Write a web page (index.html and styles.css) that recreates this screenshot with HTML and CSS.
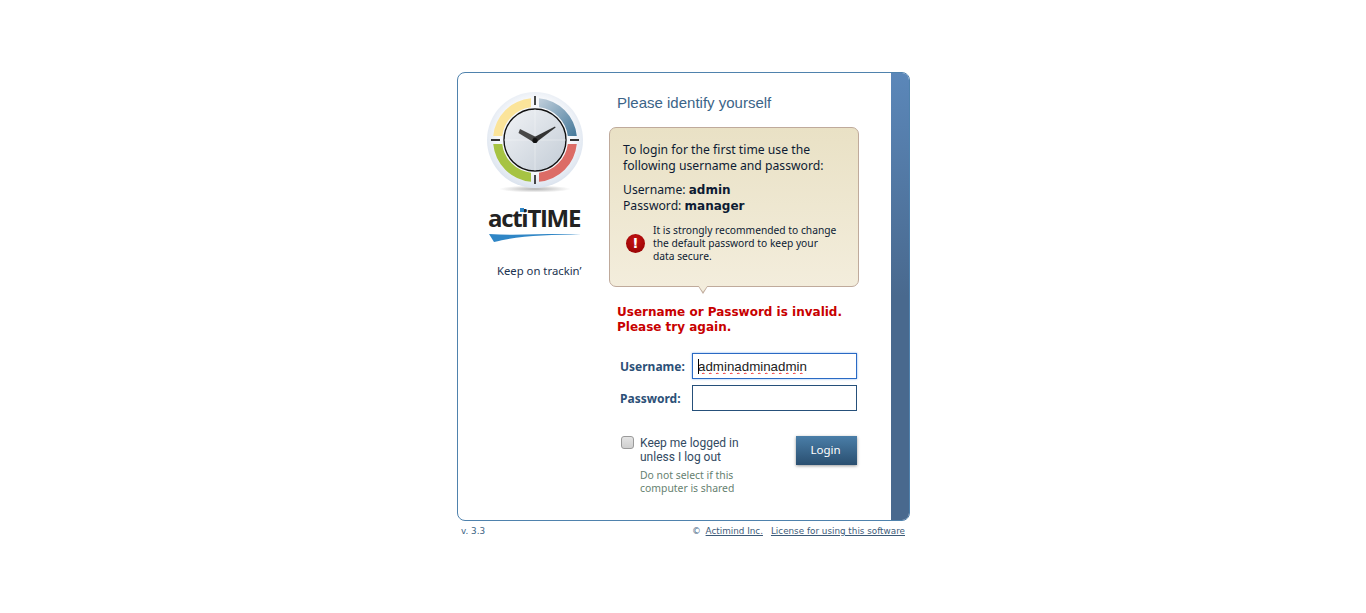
FILE: index.html
```html
<!DOCTYPE html>
<html lang="en">
<head>
    <meta charset="UTF-8">
    <title>actiTIME - Login</title>
    <link rel="stylesheet" href="styles.css">
</head>
<body>
    <div class="wrapper">
        <div class="card">
            <div class="brand">
                <svg class="clock" width="100" height="106" viewBox="0 0 100 106">
                    <defs>
                        <radialGradient id="discFill" cx="50%" cy="45%" r="55%">
                            <stop offset="0.7" stop-color="#f6f8fb"/>
                            <stop offset="1" stop-color="#dbe3ee"/>
                        </radialGradient>
                        <linearGradient id="dialFill" x1="0" y1="0" x2="1" y2="1">
                            <stop offset="0" stop-color="#f1f3f6"/>
                            <stop offset="1" stop-color="#c3ccd6"/>
                        </linearGradient>
                        <linearGradient id="blueFill" x1="0" y1="0" x2="1" y2="1">
                            <stop offset="0" stop-color="#c2d0dc"/>
                            <stop offset="1" stop-color="#44789a"/>
                        </linearGradient>
                        <radialGradient id="floorFill">
                            <stop offset="0" stop-color="#b4b4b4"/>
                            <stop offset="1" stop-color="#ffffff"/>
                        </radialGradient>
                    </defs>
                    <ellipse cx="50" cy="99" rx="36" ry="3.5" fill="url(#floorFill)"/>
                    <circle cx="50" cy="50" r="48" fill="url(#discFill)"/>
                    <path d="M46 8.2A42 42 0 0 0 8.2 46L17.2 46A33 33 0 0 1 46 17.2Z" fill="#fbe49a"/>
                    <path d="M54 8.2A42 42 0 0 1 91.8 46L82.8 46A33 33 0 0 0 54 17.2Z" fill="url(#blueFill)"/>
                    <path d="M8.2 54A42 42 0 0 0 46 91.8L46 82.8A33 33 0 0 1 17.2 54Z" fill="#a6c343"/>
                    <path d="M54 91.8A42 42 0 0 0 91.8 54L82.8 54A33 33 0 0 1 54 82.8Z" fill="#dc6c66"/>
                    <path d="M50 6V15M50 85V94M6 50H15M85 50H94" stroke="#333" stroke-width="1.8"/>
                    <circle cx="50" cy="50" r="31" fill="url(#dialFill)" stroke="#111" stroke-width="1.4"/>
                    <path d="M50 19V81M19 50H81" stroke="#fff" stroke-width="0.6" opacity="0.6"/>
                    <path d="M33.5 43L35 39L51 47L49 52.5Z" fill="#484848"/>
                    <path d="M47.5 48L70 36.5L70.6 37.5L51 52.5Z" fill="#333"/>
                    <circle cx="50" cy="50.5" r="2.6" fill="#111"/>
                </svg>
                <div class="logo-name">actiTIME</div>
                <svg class="swoosh" width="94" height="10" viewBox="0 0 94 10">
                    <path d="M1 1C30 3 62 0 93 1.5C60 1.5 28 3 6 9Z" fill="#2f86c6"/>
                </svg>
                <div class="slogan">Keep on trackin’</div>
            </div>

            <div class="main">
                <h1>Please identify yourself</h1>

                <div class="hint">
                    <p class="hint-intro">To login for the first time use the<br>following username and password:</p>
                    <p class="hint-creds">Username: <b>admin</b><br>Password: <b>manager</b></p>
                    <div class="hint-warning">
                        <span class="warning-icon">!</span>
                        <p>It is strongly recommended to change<br>the default password to keep your<br>data secure.</p>
                    </div>
                </div>

                <div class="error">Username or Password is invalid.<br>Please try again.</div>

                <form class="login-form">
                    <div class="form-row">
                        <label for="username">Username:</label>
                        <span class="field">
                            <input class="focused" type="text" id="username" value="adminadminadmin">
                            <span class="caret"></span>
                        </span>
                    </div>
                    <div class="form-row">
                        <label for="password">Password:</label>
                        <span class="field"><input type="password" id="password"></span>
                    </div>
                    <div class="form-bottom">
                        <input class="keep-check" type="checkbox" id="keepLogged">
                        <div class="keep-text">
                            <label for="keepLogged">Keep me logged in<br>unless I log out</label>
                            <p>Do not select if this<br>computer is shared</p>
                        </div>
                        <button type="button">Login</button>
                    </div>
                </form>
            </div>

            <div class="stripe"></div>
        </div>

        <div class="footer">
            <span>v. 3.3</span>
            <span class="footer-links">© <a href="#">Actimind Inc.</a><a class="license" href="#">License for using this software</a></span>
        </div>
    </div>
</body>
</html>
```

FILE: styles.css
```css
body {
    margin: 0;
    background: #fff;
    font-family: "DejaVu Sans", Verdana, sans-serif;
}
p {
    margin: 0;
}
.wrapper {
    width: 453px;
    margin: 0 auto;
    padding: 72px 0 0 1px;
}
.card {
    display: flex;
    height: 449px;
    box-sizing: border-box;
    border: 1px solid #4f82ad;
    border-radius: 8px;
    overflow: hidden;
}
.brand {
    width: 151px;
    flex: none;
    display: flex;
    flex-direction: column;
    padding: 17px 0 0 27px;
    box-sizing: border-box;
}
.clock {
    display: block;
}
.logo-name {
    position: relative;
    margin: 7px 0 0 3px;
    font-family: "Open Sans", sans-serif;
    font-size: 24px;
    font-weight: 700;
    line-height: 30px;
    letter-spacing: -1.3px;
    color: #222;
}
/* blue dot on the i of the logo */
.logo-name::after {
    content: "";
    position: absolute;
    left: 32px;
    top: 5px;
    width: 4px;
    height: 4px;
    background: #2f86c6;
}
.swoosh {
    display: block;
    margin-left: 3px;
}
.slogan {
    margin: 20px 0 0 12px;
    font-family: "Noto Sans", sans-serif;
    font-size: 11.3px;
    line-height: 16px;
    color: #1c3350;
}
.main {
    flex: 1;
    padding: 0 32px 0 0;
}
h1 {
    margin: 21px 0 0 8px;
    font-family: "Liberation Sans", Arial, sans-serif;
    font-size: 15px;
    font-weight: normal;
    line-height: 18px;
    color: #3b6488;
}
.hint {
    position: relative;
    box-sizing: border-box;
    height: 160px;
    margin-top: 15px;
    padding: 14px 13px 0;
    border: 1px solid #bfaa9b;
    border-radius: 7px;
    background: linear-gradient(#e9e1c5, #f3eddc);
    font-family: "Noto Sans", sans-serif;
    font-size: 12.2px;
    line-height: 16px;
    color: #0d1b33;
}
.hint::before, .hint::after {
    content: "";
    position: absolute;
    left: 88px;
    border-left: 5px solid transparent;
    border-right: 5px solid transparent;
}
.hint::before {
    bottom: -8px;
    border-top: 8px solid #bfaa9b;
}
.hint::after {
    bottom: -6px;
    border-top: 7px solid #f3eddc;
}
.hint b {
    font-family: "DejaVu Sans", sans-serif;
    font-size: 12px;
}
.hint-creds {
    margin-top: 8px;
}
.hint-warning {
    display: flex;
    align-items: center;
    gap: 8px;
    margin-top: 9px;
    padding-left: 3px;
    font-size: 10.25px;
    line-height: 13px;
}
.hint-warning p {
    padding-top: 1px;
}
.warning-icon {
    width: 19px;
    height: 19px;
    flex: none;
    border-radius: 50%;
    background: radial-gradient(circle at 50% 35%, #c81414, #8e0000);
    color: #fff;
    font-family: "DejaVu Sans", sans-serif;
    font-size: 14px;
    font-weight: 700;
    line-height: 19px;
    text-align: center;
}
.error {
    margin: 18px 0 0 8px;
    font-size: 12px;
    font-weight: 700;
    line-height: 15px;
    color: #c80000;
}
.login-form {
    margin-top: 18px;
}
.form-row {
    display: flex;
    align-items: center;
    height: 26px;
    margin-bottom: 6px;
    padding-left: 11px;
}
.form-row label {
    width: 72px;
    font-family: "Noto Sans", sans-serif;
    font-size: 12px;
    font-weight: 700;
    color: #2c5077;
}
.field {
    position: relative;
    display: block;
}
.field input {
    display: block;
    box-sizing: border-box;
    width: 165px;
    height: 26px;
    padding: 0 5px;
    border: 1px solid #26507a;
    background: #fff;
    font-family: "Liberation Sans", Arial, sans-serif;
    font-size: 13.33px;
    color: #222;
    outline: none;
}
.field .focused {
    border-color: #2a6ac4;
    box-shadow: 0 0 2px #7fb0ee;
    text-decoration: underline wavy #f02020 1px;
}
.caret {
    position: absolute;
    left: 6px;
    top: 6px;
    width: 1px;
    height: 15px;
    background: #000;
}
.form-bottom {
    display: flex;
    align-items: flex-start;
    margin-top: 25px;
    padding-left: 12px;
}
.keep-check {
    appearance: none;
    width: 13px;
    height: 13px;
    flex: none;
    margin: 0 6px 0 0;
    border: 1px solid #9a9a9a;
    border-radius: 3px;
    background: linear-gradient(#e4e4e4, #cfcfcf);
}
.keep-text {
    width: 156px;
}
.keep-text label {
    display: block;
    font-family: Roboto, sans-serif;
    font-size: 12px;
    line-height: 14px;
    color: #334a62;
}
.keep-text p {
    margin-top: 5px;
    font-family: "Noto Sans", sans-serif;
    font-size: 10.4px;
    line-height: 13px;
    color: #667f70;
}
button {
    width: 61px;
    height: 29px;
    flex: none;
    padding: 0 2px 2px 0;
    border: none;
    background: linear-gradient(#4a7ea8, #2a4f70);
    box-shadow: 0 1px 3px #999;
    color: #fff;
    font-family: "Noto Sans", sans-serif;
    font-size: 11.5px;
    cursor: pointer;
}
.stripe {
    width: 18px;
    flex: none;
    background: linear-gradient(#5b87b9, #49698e 50%);
}
.footer {
    display: flex;
    justify-content: space-between;
    padding: 4px 5px 0 4px;
    font-size: 8.8px;
    line-height: 12px;
    color: #3c6484;
}
.footer a {
    color: #3c5a78;
}
.footer-links a:first-of-type {
    margin-left: 2px;
}
.license {
    margin-left: 8px;
}
```
